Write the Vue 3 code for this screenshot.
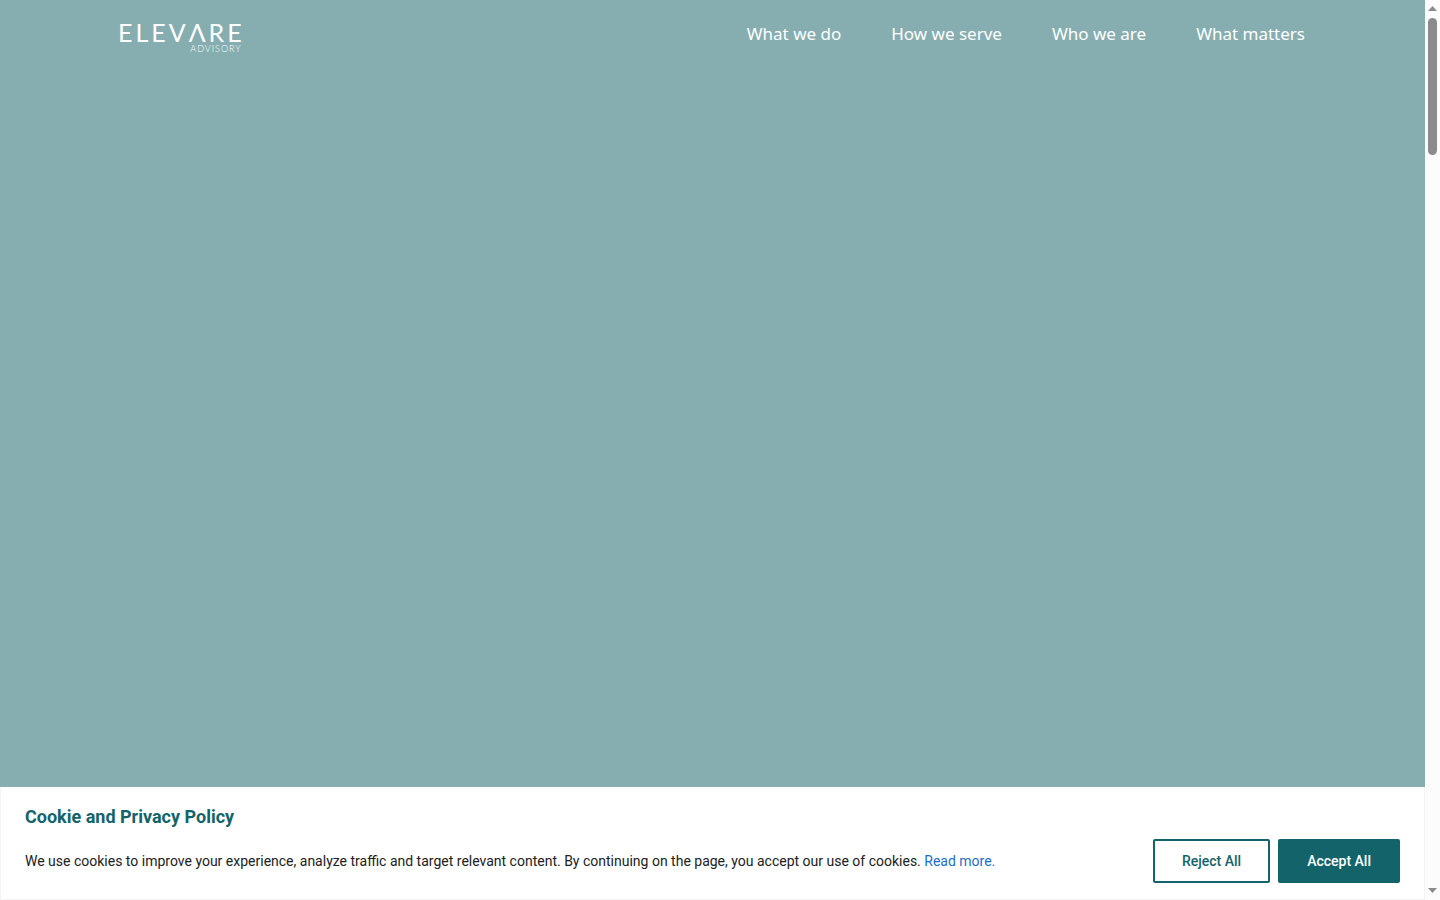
<script setup>
const links = ['What we do', 'How we serve', 'Who we are', 'What matters']
</script>

<template>
  <div class="page">
    <div class="content">
      <main class="hero">
        <header class="bar">
          <a class="logo" href="#" aria-label="Elevare Advisory">
            <span class="name">ELEVΛRE</span>
            <span class="sub">ADVISORY</span>
          </a>
          <nav class="nav">
            <a v-for="link in links" :key="link" href="#">{{ link }}</a>
          </nav>
        </header>
      </main>
      <section class="cookie" aria-labelledby="cookie-title">
        <h2 id="cookie-title">Cookie and Privacy Policy</h2>
        <div class="row">
          <p>
            We use cookies to improve your experience, analyze traffic and target relevant content. By continuing on the page, you accept our use of cookies.
            <a href="#">Read more.</a>
          </p>
          <div class="actions">
            <button type="button" class="reject">Reject All</button>
            <button type="button" class="accept">Accept All</button>
          </div>
        </div>
      </section>
    </div>
    <div class="scroll" aria-hidden="true">
      <svg width="15" height="18" viewBox="0 0 15 18"><path d="M3 11 7.5 6 12 11Z" fill="#8b8b8b" /></svg>
      <div class="track"><div class="thumb"></div></div>
      <svg width="15" height="18" viewBox="0 0 15 18"><path d="M3 6 7.5 11 12 6Z" fill="#8b8b8b" /></svg>
    </div>
  </div>
</template>

<style>
body {
  margin: 0;
}
</style>

<style scoped>
.page {
  display: flex;
  min-height: 100vh;
  background: #fcfcfc;
}
.content {
  flex: 1;
  display: flex;
  flex-direction: column;
  min-width: 0;
}
.hero {
  flex: 1;
  background: #86aeb1;
}
.bar {
  display: flex;
  justify-content: space-between;
  align-items: flex-start;
  padding: 20px 120px 0 118px;
}
.logo {
  display: flex;
  flex-direction: column;
  color: #fff;
  text-decoration: none;
  font-family: Lato, sans-serif;
}
.name {
  font-size: 25px;
  line-height: 24px;
  letter-spacing: 3px;
}
.sub {
  align-self: flex-end;
  padding-right: 3px;
  font-size: 9px;
  font-weight: 300;
  line-height: 10px;
  letter-spacing: 1px;
}
.nav {
  display: flex;
  gap: 50px;
}
.nav a {
  color: #fff;
  text-decoration: none;
  font: 17px/28px "Noto Sans", sans-serif;
}
.cookie {
  box-sizing: border-box;
  padding: 18px 24px 16px;
  border: 1px solid #f4f4f4;
  border-top: 0;
  background: #fff;
  font-family: Roboto, sans-serif;
}
h2 {
  margin: 0 0 10px;
  color: #13636a;
  font-size: 18px;
  line-height: 24px;
  font-weight: 700;
}
.row {
  display: flex;
  justify-content: space-between;
  align-items: center;
  gap: 24px;
}
p {
  margin: 0;
  color: #212121;
  font-size: 14px;
  line-height: 24px;
}
p a {
  color: #1a6fc9;
  text-decoration: none;
}
.actions {
  display: flex;
  flex-shrink: 0;
  gap: 8px;
}
button {
  padding: 8px 27px;
  border: 2px solid #13636a;
  border-radius: 2px;
  font: 500 14px/24px Roboto, sans-serif;
}
.reject {
  background: #fff;
  color: #13636a;
}
.accept {
  background: #13636a;
  color: #fff;
}
.scroll {
  display: flex;
  flex-direction: column;
  width: 15px;
}
.scroll svg {
  display: block;
}
.track {
  flex: 1;
  padding: 0 3px;
}
.thumb {
  height: 137px;
  border-radius: 5px;
  background: #8b8b8b;
}
</style>
